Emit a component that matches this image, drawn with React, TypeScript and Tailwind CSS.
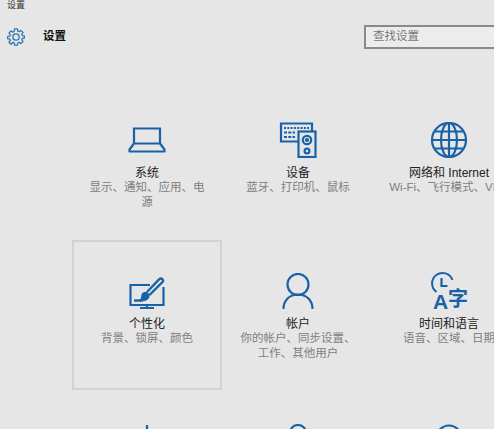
import type { ReactNode } from "react";

const BLUE = "#1a62a8";

function Laptop() {
  return (
    <svg className="mb-[5px]" width="38" height="26" viewBox="0 0 38 26" fill="none" stroke={BLUE} strokeWidth="2.200">
      <path d="M6 16V1.500h26V16" />
      <path d="M6 16.500h26l4.500 6v2H1.500v-2z" strokeLinejoin="round" />
    </svg>
  );
}

function Devices() {
  return (
    <svg width="38" height="36" viewBox="0 0 38 36" fill="none" stroke={BLUE} strokeWidth="2.200">
      <path d="M19 19.500H2V1.500h31V9" />
      <rect x="19.500" y="9.500" width="17" height="25.500" />
      <circle cx="28" cy="18" r="4.200" />
      <circle cx="28" cy="18" r="1" fill={BLUE} />
      <circle cx="28" cy="29" r="2.400" />
      <path d="M5 6h25" strokeDasharray="2 1.300" strokeWidth="1.800" />
      <path d="M5 10.500h11M5 15h11" strokeDasharray="3 1.300" strokeWidth="2" />
    </svg>
  );
}

function Globe() {
  return (
    <svg width="38" height="36" viewBox="0 0 38 36" fill="none" stroke={BLUE} strokeWidth="2.200">
      <circle cx="19" cy="18" r="17" />
      <ellipse cx="19" cy="18" rx="8" ry="17" />
      <path d="M19 1v34M2 18h34M5 9.500h28M5 26.500h28" />
    </svg>
  );
}

function Brush() {
  return (
    <svg width="36" height="32" viewBox="0 0 36 32" fill="none" stroke={BLUE} strokeWidth="2">
      <path d="M21 8H1.500v20h33V10" strokeWidth="2.200" />
      <path d="M18 28v3.500M11 31h14" strokeWidth="2.200" />
      <path d="M5 23.500h9" strokeWidth="2.400" />
      <path d="M13 23.500c4 0 7-2 7-5.500l-2.500-2.500c-3 0-4.500 1.500-4.500 3.500s0 3-2 4.500z" fill={BLUE} strokeWidth="1.500" />
      <path d="M18 15L30.500 2c2-1.500 4.500 1 3 3L20.500 18" strokeWidth="2.400" />
    </svg>
  );
}

function User() {
  return (
    <svg width="32" height="36" viewBox="0 0 32 36" fill="none" stroke={BLUE} strokeWidth="2.200">
      <circle cx="16" cy="11.500" r="10.500" />
      <path d="M1.500 36c0-8.500 6-14.500 14.500-14.500S30.500 27.500 30.500 36" />
    </svg>
  );
}

function TimeLang() {
  return (
    <svg className="overflow-visible" width="37" height="36" viewBox="0 0 37 36" fill="none" stroke={BLUE} strokeWidth="2">
      <path d="M5.500 19A10.500 10.500 0 1 1 21.500 7" />
      <path d="M10.500 5v8h6" strokeWidth="2.200" />
      <text x="2" y="36" fontSize="21" fontWeight="700" fill={BLUE} stroke="none" fontFamily="'Liberation Sans', sans-serif">A</text>
      <text x="17" y="33" fontSize="20" fontWeight="700" fill={BLUE} stroke="none" fontFamily="'Noto Sans CJK SC', sans-serif">字</text>
    </svg>
  );
}

function Access() {
  return (
    <svg width="38" height="36" viewBox="0 0 38 36" fill="none" stroke={BLUE} strokeWidth="2.200">
      <path d="M19 1v34" />
      <path d="M11 5v9M27 7v6" />
    </svg>
  );
}

function Lock() {
  return (
    <svg width="24" height="36" viewBox="0 0 24 36" fill="none" stroke={BLUE} strokeWidth="2.200">
      <path d="M4 16V9a8 8 0 0 1 16 0v7" />
      <rect x="1.500" y="16" width="21" height="19" />
    </svg>
  );
}

function Refresh() {
  return (
    <svg width="38" height="36" viewBox="0 0 38 36" fill="none" stroke={BLUE} strokeWidth="2.200">
      <path d="M5 18A14 16.500 0 0 1 33 18" />
      <path d="M33 18A14 16.500 0 0 1 5 18" />
    </svg>
  );
}

function Gear() {
  return (
    <svg className="shrink-0" width="18" height="18" viewBox="0 0 18 18" fill="none" stroke="#2f78b4" strokeWidth="1.300">
      <circle cx="9" cy="9" r="3.200" />
      <path d="M7.600 .8h2.800l.4 2.300 1.300.6 1.900-1.300 2 2-1.300 1.900.6 1.300 2.300.4v2l-2.300.4-.6 1.300 1.300 1.900-2 2-1.900-1.300-1.300.6-.4 2.300H7.600l-.4-2.300-1.300-.6L4 16.200l-2-2 1.300-1.900-.6-1.300-2.300-.4V8.600l2.300-.4.6-1.300L2 5l2-2 1.900 1.100 1.300-.6z" strokeLinejoin="round" />
    </svg>
  );
}

function Tile({ title, sub, icon, selected }: { title?: string; sub?: string; icon: ReactNode; selected?: boolean }) {
  return (
    <div className={`h-[150px] flex flex-col items-center border-2 ${selected ? "border-[#d2d2d2]" : "border-transparent"}`}>
      <div className="h-[67px] flex items-end justify-center shrink-0">{icon}</div>
      <div className="mt-[8px] text-[12px] leading-[14px] text-[#222] whitespace-nowrap">{title}</div>
      <div className="w-[125px] text-center text-[11.500px] leading-[14.500px] text-[#808080] flex justify-center">
        <span className="shrink-0 max-w-[125px]">{sub}</span>
      </div>
    </div>
  );
}

export default function App() {
  return (
    <div className="w-[494px] h-[429px] overflow-hidden bg-[#e6e6e6] font-['Liberation_Sans','Noto_Sans_CJK_SC',sans-serif]">
      <div className="h-[12px] pl-[7px] text-[9px] leading-[11px] text-[#333]">设置</div>
      <div className="flex items-center h-[26px] mt-[12px] pl-[7px]">
        <Gear />
        <span className="ml-[18px] shrink-0 whitespace-nowrap text-[11.500px] font-bold text-[#111]">设置</span>
        <div className="ml-[298px] w-[139px] h-[24px] shrink-0 flex items-center border-2 border-[#8a8a8a] bg-[#ececec] pl-[7px] text-[11.500px] text-[#777]">查找设置</div>
      </div>
      <div className="grid grid-cols-[150px_150px_150px] gap-px ml-[72px] mt-[39px]">
        <Tile title="系统" sub="显示、通知、应用、电源" icon={<Laptop />} />
        <Tile title="设备" sub="蓝牙、打印机、鼠标" icon={<Devices />} />
        <Tile title="网络和 Internet" sub="Wi-Fi、飞行模式、VPN" icon={<Globe />} />
        <Tile title="个性化" sub="背景、锁屏、颜色" icon={<Brush />} selected />
        <Tile title="帐户" sub="你的帐户、同步设置、工作、其他用户" icon={<User />} />
        <Tile title="时间和语言" sub="语音、区域、日期" icon={<TimeLang />} />
        <Tile icon={<Access />} />
        <Tile icon={<Lock />} />
        <Tile icon={<Refresh />} />
      </div>
    </div>
  );
}
